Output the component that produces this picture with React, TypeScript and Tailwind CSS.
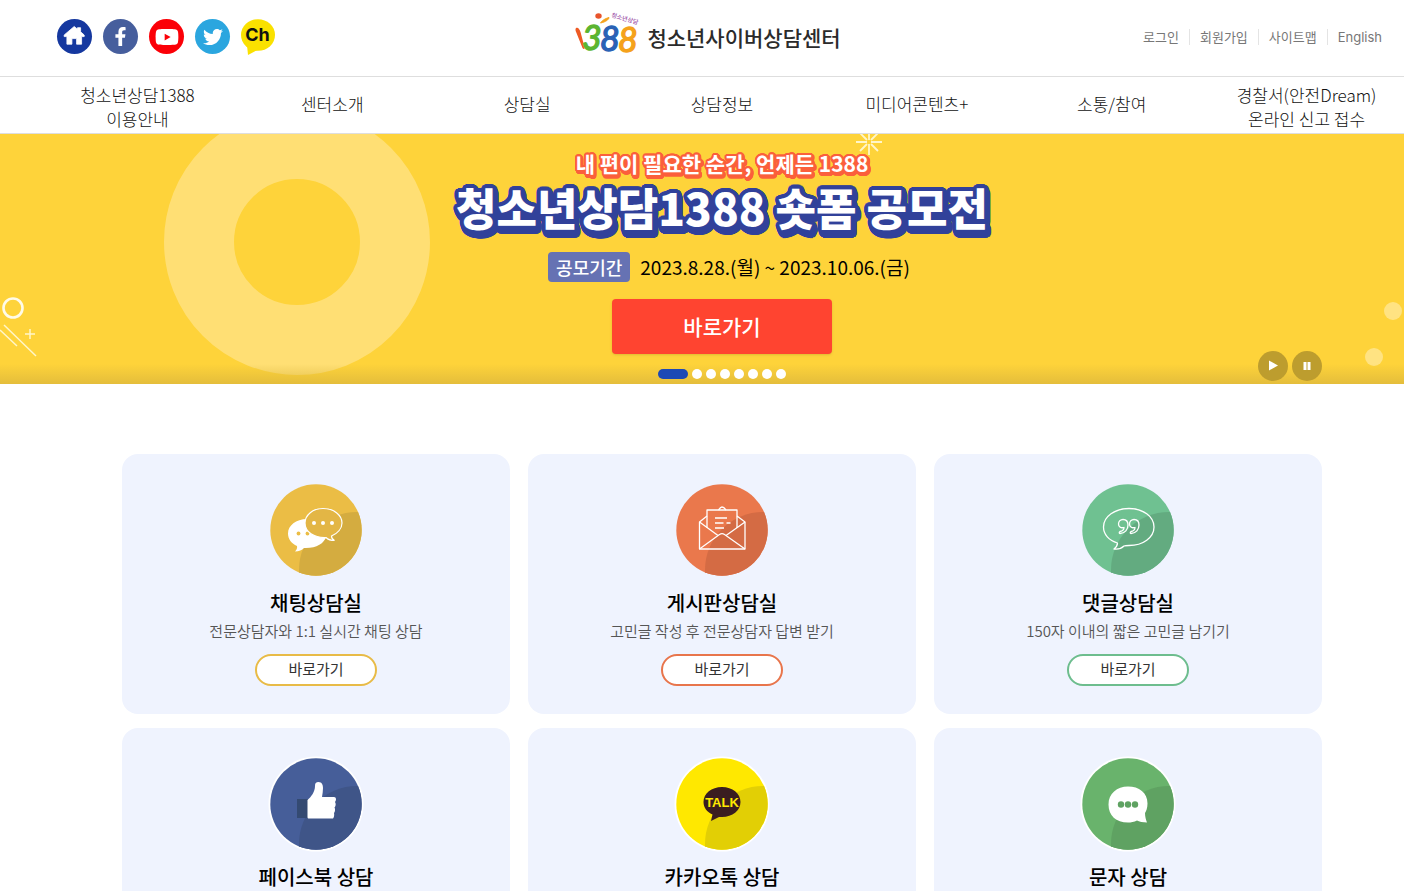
import type { ReactNode } from "react";
import { FaFacebookF, FaTwitter, FaYoutube } from "react-icons/fa";

const NAV_ITEMS: string[][] = [
  ["청소년상담1388", "이용안내"],
  ["센터소개"],
  ["상담실"],
  ["상담정보"],
  ["미디어콘텐츠+"],
  ["소통/참여"],
  ["경찰서(안전Dream)", "온라인 신고 접수"],
];

const UTILITY_LINKS = ["로그인", "회원가입", "사이트맵", "English"];

function HomeGlyph() {
  return (
    <svg viewBox="0 0 35 35" className="size-full" aria-hidden="true">
      <path
        d="M17.2 7.5 L20.5 10.2 V8.7 H23.6 V12.8 L27.2 16 V17.6 H24.6 V25.2 H19.6 V19.6 H14.9 V25.2 H9.9 V17.6 H7.2 V16 Z"
        fill="#fff"
        stroke="#fff"
        strokeWidth="0.8"
        strokeLinejoin="round"
      />
    </svg>
  );
}

function SocialLinks() {
  const base = "flex size-[35px] items-center justify-center rounded-full text-white";
  return (
    <div className="flex items-center gap-[11px] pl-[23px]">
      <a href="#home" aria-label="홈" className={`${base} bg-[#15389f]`}>
        <HomeGlyph />
      </a>
      <a href="#facebook" aria-label="페이스북" className={`${base} bg-[#465e9d]`}>
        <FaFacebookF className="size-[19px]" />
      </a>
      <a href="#youtube" aria-label="유튜브" className={`${base} bg-[#fb0007]`}>
        <FaYoutube className="size-[24px]" />
      </a>
      <a href="#twitter" aria-label="트위터" className={`${base} bg-[#2ba6df]`}>
        <FaTwitter className="size-[20px]" />
      </a>
      <a href="#channel" aria-label="카카오 채널" className="block size-[36px]">
        <svg viewBox="0 0 36 36" className="size-full" aria-hidden="true">
          <ellipse cx="17" cy="16" rx="17" ry="15.8" fill="#fae100" />
          <path d="M6 26 L7 36 L18 30 Z" fill="#fae100" />
          <text x="16.500" y="22" textAnchor="middle" fontFamily="Inter, sans-serif" fontSize="18" fontWeight="700" fill="#111">
            Ch
          </text>
        </svg>
      </a>
    </div>
  );
}

function Logo() {
  return (
    <a href="#main" className="flex items-center gap-1 text-[#2b2b2b]">
      <svg viewBox="0 3 68 48" className="h-12 w-[68px] overflow-visible" aria-hidden="true">
        <path d="M1 18 C3 17 4.500 19 5.500 22 L9.500 37 C10 39.500 8.500 39.500 7.500 38 L1.500 23 C0.500 21 0 19 1 18 Z" fill="#ee5a24" />
        <ellipse cx="23.500" cy="6" rx="3.200" ry="2.800" fill="#e8542c" />
        <path d="M25.500 13 C27.500 10 30.500 8.500 34 7.500 C34 9.500 30.500 12 25.500 13 Z" fill="#f5a21b" stroke="#f5a21b" />
        <g fontFamily="Lato, sans-serif" fontSize="34" fontStyle="italic" fontWeight="400" strokeWidth="1.400">
          <text x="7" y="40" fill="#5cb531" stroke="#5cb531">3</text>
          <text x="25" y="41" fill="#2a62b5" stroke="#2a62b5">8</text>
          <text x="43" y="42" fill="#f5a21b" stroke="#f5a21b">8</text>
        </g>
        <text x="36" y="7" transform="rotate(16 36 7)" fontFamily="'Noto Sans CJK KR', sans-serif" fontSize="6" fontWeight="500" fill="#9d4fa8">
          청소년상담
        </text>
      </svg>
      <span className="text-[21px] leading-8 font-medium">청소년사이버상담센터</span>
    </a>
  );
}

function Header() {
  return (
    <header>
      <div className="grid h-[77px] grid-cols-[1fr_auto_1fr] items-center border-b border-[#dedede] pr-[22px] pb-[3px] pl-[34px]">
        <SocialLinks />
        <Logo />
        <ul className="flex justify-end font-[Inter,'Noto_Sans_CJK_KR',sans-serif] text-[13px] leading-4 text-[#777]">
          {UTILITY_LINKS.map((label) => (
            <li key={label} className="border-l border-[#e4e4e4] px-2.5 first:border-l-0 last:pr-0">
              <a href="#util">{label}</a>
            </li>
          ))}
        </ul>
      </div>
      <nav className="grid h-[57px] grid-cols-7 items-center border-b border-[#dedede] pl-10 text-center text-[17px] leading-6 font-light text-[#111]">
        {NAV_ITEMS.map((lines) => (
          <a key={lines[0]} href="#menu" className={`block whitespace-nowrap ${lines.length > 1 ? "pt-1" : "pb-0.5"}`}>
            {lines.map((line) => (
              <span key={line} className="block">
                {line}
              </span>
            ))}
          </a>
        ))}
      </nav>
    </header>
  );
}

function BannerDecor() {
  return (
    <div aria-hidden="true">
      <div className="absolute -top-[25px] left-[164px] size-[266px] rounded-full border-[70px] border-[#ffdf74]" />
      <svg viewBox="0 0 60 80" className="absolute top-[154px] left-0 h-20 w-[60px]" fill="none" stroke="#fff6c9">
        <circle cx="13" cy="20" r="9.500" stroke="#fffbe8" strokeWidth="2.600" />
        <path d="M0 42 L17 58 M4 37 L36 68" strokeWidth="1.500" />
        <path d="M30 41 V51 M25 46 H35" strokeWidth="1.500" />
      </svg>
      <svg viewBox="0 0 32 32" className="absolute -top-2 left-1/2 ml-[151px] size-8" stroke="#fff6c9" strokeWidth="1.800">
        <path d="M16 3 V14 M16 18 V29 M3 16 H14 M18 16 H29 M7 7 L14 14 M18 18 L25 25 M25 7 L18 14 M14 18 L7 25" />
      </svg>
      <svg viewBox="0 0 44 80" className="absolute top-[160px] right-0 h-20 w-11" fill="#ffe382">
        <circle cx="33" cy="17" r="9" />
        <circle cx="14" cy="63" r="9" />
      </svg>
      <div className="absolute inset-x-0 bottom-0 h-5 bg-linear-to-b from-transparent to-[#d9b43c]/70" />
    </div>
  );
}

/** Round outline of the given radius, repeated at each [x, y] depth step. */
function outlineShadow(radius: number, color: string, depth: number[][]): string {
  const steps = 24;
  return depth
    .flatMap(([dx, dy]) =>
      Array.from({ length: steps }, (_, i) => {
        const a = (i / steps) * Math.PI * 2;
        return `${(dx + Math.cos(a) * radius).toFixed(2)}px ${(dy + Math.sin(a) * radius).toFixed(2)}px 0 ${color}`;
      }),
    )
    .join(",");
}

const LEAD_SHADOW = outlineShadow(2, "#fb5f3b", [[0, 0], [1, 1], [1, 2]]);
const TITLE_SHADOW = outlineShadow(4, "#31419a", [[0, 0], [1, 1], [1, 3], [2, 4]]);

function Banner() {
  return (
    <section className="relative h-[250px] overflow-hidden bg-[#fed33a] pl-10">
      <BannerDecor />
      <div className="relative mx-auto flex h-full max-w-[1200px] flex-col items-center">
        <p className="pt-3.5 text-[21px] leading-[30px] font-bold text-white" style={{ textShadow: LEAD_SHADOW }}>
          내 편이 필요한 순간, 언제든 1388
        </p>
        <h1 className="text-[44px] leading-[58px] font-black whitespace-nowrap text-white" style={{ textShadow: TITLE_SHADOW }}>
          청소년상담1388 숏폼 공모전
        </h1>
        <div className="mt-4 flex items-center gap-2.5 pl-3.5 text-black">
          <span className="flex h-[30px] items-center rounded bg-[#6672b3] px-2 text-[18px] font-medium text-white">공모기간</span>
          <span className="text-[19px] leading-[30px]">2023.8.28.(월) ~ 2023.10.06.(금)</span>
        </div>
        <a
          href="#contest"
          className="mt-[17px] flex h-[55px] w-[220px] items-center justify-center rounded bg-[#ff4430] text-[21px] font-medium text-white shadow-sm"
        >
          바로가기
        </a>
        <div className="mt-[15px] flex items-center gap-1">
          <button type="button" aria-label="배너 1" className="h-2.5 w-[30px] rounded-full bg-[#1c49b5]" />
          {[2, 3, 4, 5, 6, 7, 8].map((n) => (
            <button key={n} type="button" aria-label={`배너 ${n}`} className="size-2.5 rounded-full bg-white" />
          ))}
        </div>
        <div className="absolute right-0 bottom-[3px] flex gap-1">
          <button type="button" aria-label="재생" className="flex size-[30px] items-center justify-center rounded-full bg-[#bd9d2e]">
            <svg viewBox="0 0 10 12" className="h-3 w-2.5" fill="#fff">
              <path d="M1 0.500 L10 5.500 L1 10.500 Z" />
            </svg>
          </button>
          <button type="button" aria-label="정지" className="flex size-[30px] items-center justify-center rounded-full bg-[#bd9d2e]">
            <svg viewBox="0 0 8 8" className="size-2" fill="#fff">
              <path d="M0.500 0 H3.500 V8 H0.500 Z M4.500 0 H7.500 V8 H4.500 Z" />
            </svg>
          </button>
        </div>
      </div>
    </section>
  );
}

function RoundIcon({ id, base, shade, ring, children }: { id: string; base: string; shade: string; ring?: boolean; children: ReactNode }) {
  return (
    <svg viewBox="0 0 92 92" className="size-[92px] overflow-visible" aria-hidden="true">
      <clipPath id={id}>
        <circle cx="46" cy="46" r="45.700" />
      </clipPath>
      {ring && <circle cx="46" cy="46" r="47.500" fill="#fff" />}
      <g clipPath={`url(#${id})`}>
        <rect width="92" height="92" fill={base} />
        <circle cx="87" cy="86" r="58" fill={shade} />
      </g>
      {children}
    </svg>
  );
}

const chatIcon = (
  <RoundIcon id="chat" base="#ebbd45" shade="#d4ac40">
    <path d="M37 35 C26 35 18 41.500 18 49.500 C18 55 21.500 59.500 27 62 C27.500 64 26.500 66 25 67.500 C29 67.500 32 66 34 64 C46 64.500 54 60 56.500 52 Z" fill="#fff" />
    <circle cx="28.500" cy="49.500" r="1.900" fill="#ebbd45" />
    <circle cx="37.500" cy="49.500" r="1.900" fill="#ebbd45" />
    <path d="M53 24.500 C63.500 24.500 72 31 72 39 C72 44.500 67.500 49.500 61.500 52 C61.500 54 62.500 55.500 64.500 56.500 C61 56.500 58 55.500 56 53.500 C44 54 35 48 35 39 C35 31 43 24.500 53 24.500 Z" fill="#e3b645" stroke="#fff" strokeWidth="1.200" />
    <g fill="#fff">
      <circle cx="44" cy="39" r="2" />
      <circle cx="53" cy="39" r="2" />
      <circle cx="62" cy="39" r="2" />
    </g>
  </RoundIcon>
);

const mailIcon = (
  <RoundIcon id="mail" base="#ea784c" shade="#d46b44">
    <g fill="none" stroke="#fff" strokeWidth="1.300" strokeLinejoin="round">
      <path d="M31 32 L23.500 38 V65 H69 V38 L61 32" />
      <path d="M23.500 38 L42 51.500 M69 38 L50 51.500" />
      <path d="M31 44 V26 H61 V44" />
      <path d="M42.500 26 C44 24 45 23 46 23 C47 23 48.500 24 50 26" />
      <path d="M23.500 65 L43.500 50.500 C45 49.500 47 49.500 48.500 50.500 L69 65" />
      <path d="M39 34 H51 M39 39 H47.500 M50.500 39 H54.500 M39 44 H48" strokeWidth="1.500" />
    </g>
  </RoundIcon>
);

const quoteIcon = (
  <RoundIcon id="quote" base="#6fc191" shade="#63ab80">
    <g fill="none" stroke="#fff" strokeWidth="1.300" strokeLinejoin="round">
      <path d="M47 24.500 C61 24.500 72 32.500 72 43 C72 53.500 61 61.500 47 61.500 C44 61.500 43 61.500 42 62 C39 65 36 65.500 32 65 C34.500 63 35.500 61.500 35.500 59 C27 56.500 21.500 50.500 21.500 43 C21.500 32.500 33 24.500 47 24.500 Z" />
      <path d="M41 35.500 C44.500 35.500 46 38 46 41 C46 45.500 43 49.500 38 49.500 C37 49.500 37 48 38 47.500 C40.500 47 42 45.500 42 43.500 C38.500 44.500 36.500 42.500 36.500 40 C36.500 37.500 38.500 35.500 41 35.500 Z" />
      <path d="M52 35.500 C55.500 35.500 57 38 57 41 C57 45.500 54 49.500 49 49.500 C48 49.500 48 48 49 47.500 C51.500 47 53 45.500 53 43.500 C49.500 44.500 47.500 42.500 47.500 40 C47.500 37.500 49.500 35.500 52 35.500 Z" />
    </g>
  </RoundIcon>
);

const thumbIcon = (
  <RoundIcon id="thumb" base="#465e99" shade="#3f5588" ring>
    <rect x="27" y="41" width="11" height="19" fill="#344a72" />
    <path d="M37.500 42 C41 39 45 34 45 28 C45 25 46 24 48.500 24 C52 24 53 27 53 30 C53 33 52.500 36 52 39 H64 C66.500 39 66.500 42.500 65 44 C66 45.500 66 48 64.500 49.500 C65.500 51 65 54 64 55 C64.500 57 64 59.500 63 60.500 H39 C38 60.500 37.500 60 37.500 59 Z" fill="#fff" />
  </RoundIcon>
);

const talkIcon = (
  <RoundIcon id="talk" base="#ffe800" shade="#e2cf05" ring>
    <path d="M46 29 C56.500 29 64.500 35.500 64.500 44 C64.500 52.500 56.500 59 46 59 H43 L35 63 L36.500 56.500 C31 54 27.500 49.500 27.500 44 C27.500 35.500 35.500 29 46 29 Z" fill="#3a1d20" />
    <text x="46" y="49" textAnchor="middle" fontFamily="'Liberation Sans', sans-serif" fontWeight="700" fontSize="13" fill="#ffe800">
      TALK
    </text>
  </RoundIcon>
);

const smsIcon = (
  <RoundIcon id="sms" base="#69b36c" shade="#5fa262" ring>
    <path d="M46 28.500 C57 28.500 65.500 34.500 65.500 45.500 C65.500 50 64 53.500 63 55 C63 59 64 62 65 64.500 C61 64.500 57 63.500 55 62.500 C52 64 49 64.500 46 64.500 C34 64.500 26.500 57.500 26.500 46.500 C26.500 35.500 35 28.500 46 28.500 Z" fill="#fff" />
    <g fill="#5fa262">
      <circle cx="39" cy="46.500" r="3.200" />
      <circle cx="46" cy="46.500" r="3.200" />
      <circle cx="53" cy="46.500" r="3.200" />
    </g>
  </RoundIcon>
);

type Service = { title: string; icon: ReactNode; description?: string; border?: string };

const SERVICES: Service[] = [
  { title: "채팅상담실", icon: chatIcon, description: "전문상담자와 1:1 실시간 채팅 상담", border: "border-[#e8bb47]" },
  { title: "게시판상담실", icon: mailIcon, description: "고민글 작성 후 전문상담자 답변 받기", border: "border-[#e8754c]" },
  { title: "댓글상담실", icon: quoteIcon, description: "150자 이내의 짧은 고민글 남기기", border: "border-[#6dbd8e]" },
  { title: "페이스북 상담", icon: thumbIcon },
  { title: "카카오톡 상담", icon: talkIcon },
  { title: "문자 상담", icon: smsIcon },
];

function ServiceCard({ title, icon, description, border }: Service) {
  return (
    <article className="flex min-h-[260px] flex-col items-center rounded-2xl bg-[#eff3fe] pt-[30px]">
      {icon}
      <h2 className="mt-[13px] text-[20px] leading-7 font-medium text-black">{title}</h2>
      {description && <p className="mt-[3px] text-[15px] leading-[22px] font-[350] text-[#555]">{description}</p>}
      {border && (
        <a
          href="#service"
          className={`mt-3 flex h-8 w-[122px] items-center justify-center rounded-full border-2 bg-white pb-[3px] text-[15px] leading-6 text-[#333] ${border}`}
        >
          바로가기
        </a>
      )}
    </article>
  );
}

export default function App() {
  return (
    <div className="bg-white font-['Noto_Sans_CJK_KR',sans-serif]">
      <Header />
      <main>
        <Banner />
        <div className="pt-[70px] pl-10">
          <div className="mx-auto grid max-w-[1200px] grid-cols-3 gap-x-[18px] gap-y-3.5">
            {SERVICES.map((service) => (
              <ServiceCard key={service.title} {...service} />
            ))}
          </div>
        </div>
      </main>
    </div>
  );
}
